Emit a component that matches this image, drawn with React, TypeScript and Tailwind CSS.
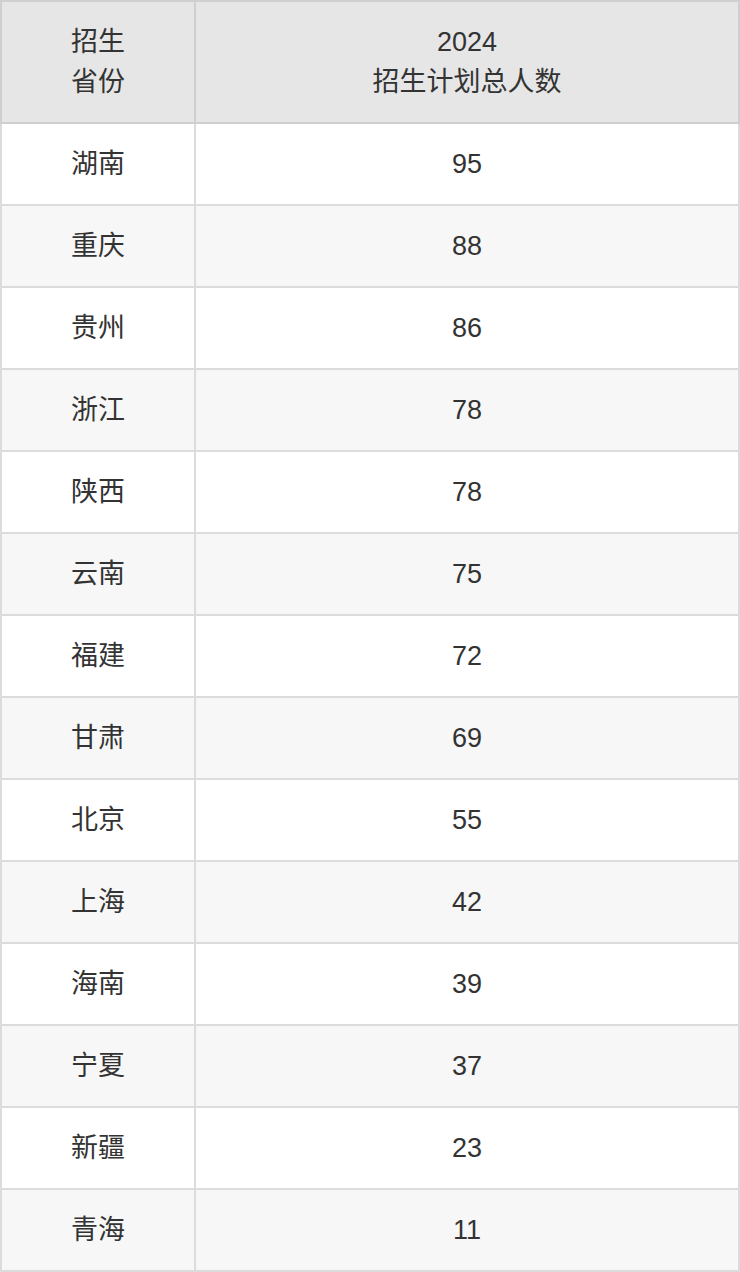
import React from "react";

const rows: [string, number][] = [
  ["湖南", 95],
  ["重庆", 88],
  ["贵州", 86],
  ["浙江", 78],
  ["陕西", 78],
  ["云南", 75],
  ["福建", 72],
  ["甘肃", 69],
  ["北京", 55],
  ["上海", 42],
  ["海南", 39],
  ["宁夏", 37],
  ["新疆", 23],
  ["青海", 11],
];

export default function App() {
  return (
    <div className="w-[740px] bg-white font-['Liberation_Sans','Noto_Sans_CJK_SC',sans-serif] text-[#333] text-[27px] leading-[40px]">
      <table className="w-[740px] border-collapse table-fixed">
        <colgroup>
          <col className="w-[194px]" />
          <col />
        </colgroup>
        <thead>
          <tr className="bg-[#e6e6e6] h-[122px]">
            <th className="border-2 border-[#cfcfcf] font-normal text-center align-middle">
              招生
              <br />
              省份
            </th>
            <th className="border-2 border-[#cfcfcf] font-normal text-center align-middle">
              2024
              <br />
              招生计划总人数
            </th>
          </tr>
        </thead>
        <tbody>
          {rows.map(([name, n], i) => (
            <tr key={name + i} className={`h-[82px] ${i % 2 === 1 ? "bg-[#f7f7f7]" : "bg-white"}`}>
              <td className="border-2 border-[#dcdcdc] text-center align-middle">{name}</td>
              <td className="border-2 border-[#dcdcdc] text-center align-middle">{n}</td>
            </tr>
          ))}
        </tbody>
      </table>
    </div>
  );
}
